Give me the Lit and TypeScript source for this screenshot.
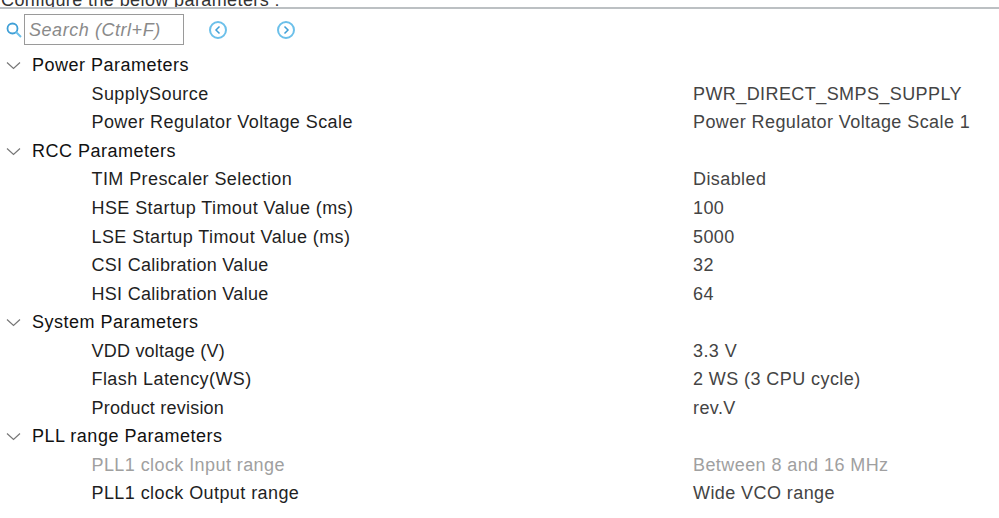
import { LitElement, html, css, svg } from "lit";
import { customElement } from "lit/decorators.js";

type Item = { label: string; value: string; muted?: boolean; fit?: string };
type Group = { title: string; items: Item[] };

const GROUPS: Group[] = [
  { title: "Power Parameters", items: [
    { label: "SupplySource", value: "PWR_DIRECT_SMPS_SUPPLY" },
    { label: "Power Regulator Voltage Scale", value: "Power Regulator Voltage Scale 1" },
  ]},
  { title: "RCC Parameters", items: [
    { label: "TIM Prescaler Selection", value: "Disabled" },
    { label: "HSE Startup Timout Value (ms)", value: "100" },
    { label: "LSE Startup Timout Value (ms)", value: "5000" },
    { label: "CSI Calibration Value", value: "32", fit: "tight" },
    { label: "HSI Calibration Value", value: "64", fit: "tight" },
  ]},
  { title: "System Parameters", items: [
    { label: "VDD voltage (V)", value: "3.3 V", fit: "tighter" },
    { label: "Flash Latency(WS)", value: "2 WS (3 CPU cycle)" },
    { label: "Product revision", value: "rev.V", fit: "tighter" },
  ]},
  { title: "PLL range Parameters", items: [
    { label: "PLL1 clock Input range", value: "Between 8 and 16 MHz", muted: true },
    { label: "PLL1 clock Output range", value: "Wide VCO range" },
  ]},
];

const nav = (d: string) => html`<svg class="nav" width="20" height="20" viewBox="0 0 20 20">
  <circle cx="10" cy="10" r="8" fill="none" stroke="#6cc0ea" stroke-width="2"></circle>
  ${svg`<path d=${d} fill="none" stroke="#3f9fd6" stroke-width="1.5"></path>`}
</svg>`;

@customElement("app-root")
export class AppRoot extends LitElement {
  static styles = css`
    :host {
      display: block;
      width: 999px;
      height: 518px;
      overflow: hidden;
      background: #fff;
      font-family: "Liberation Sans", Arial, sans-serif;
      font-size: 18px;
      color: #1c1c1c;
    }
    .caption {
      height: 7px;
      line-height: 0px;
      color: #333;
      padding-left: 1px;
      overflow: hidden;
      border-bottom: 2px solid #bcc0c3;
      white-space: nowrap;
      letter-spacing: 0.4px;
    }
    .toolbar {
      display: flex;
      align-items: center;
      height: 32px;
      margin-top: 5px;
      padding-left: 6px;
    }
    .search-icon { margin-right: 2px; flex: none; }
    .search {
      width: 160px;
      height: 31px;
      margin-top: -1px;
      box-sizing: border-box;
      border: 1px solid #9a9a9a;
      padding-left: 4px;
      line-height: 31px;
      font-style: italic;
      color: #8a8a8a;
      flex: none;
      letter-spacing: 0.55px;
    }
    .nav { flex: none; margin-left: 24px; }
    .nav + .nav { margin-left: 48px; }
    .row {
      display: flex;
      align-items: center;
      height: 28.55px;
      white-space: nowrap;
    }
    .group { color: #111; letter-spacing: 0.5px; }
    .chev { width: 32px; flex: none; padding-left: 6px; box-sizing: border-box; display: flex; }
    .label { width: 693px; padding-left: 91.5px; box-sizing: border-box; flex: none; letter-spacing: 0.42px; color: #1f1f1f; }
    .label.tight { letter-spacing: 0.3px; }
    .label.tighter { letter-spacing: 0.22px; }
    .value { color: #444; letter-spacing: 0.42px; }
    .muted .label, .muted .value { color: #a0a0a0; }
    .tree { margin-top: 5.5px; }
  `;

  render() {
    return html`
      <div class="caption">Configure the below parameters :</div>
      <div class="toolbar">
        <svg class="search-icon" width="16" height="16" viewBox="0 0 16 16">
          <circle cx="6.5" cy="6.5" r="5" fill="none" stroke="#3f9fd6" stroke-width="1.8"></circle>
          <path d="M10 10l5 5" stroke="#6cc0ea" stroke-width="2"></path>
        </svg>
        <div class="search">Search (Ctrl+F)</div>
        ${nav("M11.5 6.5L8 10l3.5 3.5")}
        ${nav("M8.5 6.5L12 10l-3.5 3.5")}
      </div>
      <div class="tree">
        ${GROUPS.map((g) => html`
          <div class="row group">
            <span class="chev"><svg width="15" height="9" viewBox="0 0 15 9"><path d="M1 1.5l6.5 6 6.5-6" fill="none" stroke="#777" stroke-width="1.2"></path></svg></span>
            <span>${g.title}</span>
          </div>
          ${g.items.map((i) => html`
            <div class="row ${i.muted ? "muted" : ""}">
              <span class="label ${i.fit ?? ""}">${i.label}</span>
              <span class="value">${i.value}</span>
            </div>`)}
        `)}
      </div>
    `;
  }
}
